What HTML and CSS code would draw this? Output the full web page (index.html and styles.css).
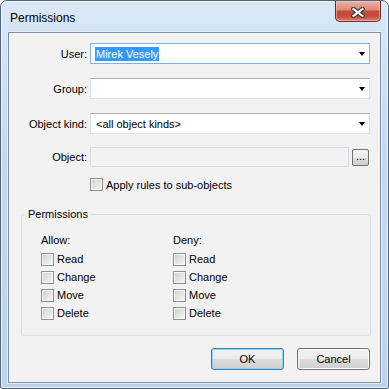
FILE: index.html
```html
<!DOCTYPE html>
<html lang="en">
  <head>
    <meta charset="UTF-8" />
    <title>Permissions</title>
    <link rel="stylesheet" href="styles.css">
  </head>
  <body>
    <div class="window">
      <div class="titlebar">
        <span class="title">Permissions</span>
        <button class="close" title="Close">
          <svg width="14" height="11" viewBox="0 0 14 11">
            <path d="M2.5 2 L11.5 9 M11.5 2 L2.5 9" stroke="#3b3b3b" stroke-width="4.5" stroke-linecap="square" />
            <path d="M2.5 2 L11.5 9 M11.5 2 L2.5 9" stroke="#ffffff" stroke-width="2.2" stroke-linecap="square" />
          </svg>
        </button>
      </div>

      <div class="client">
        <!-- Filter fields -->
        <div class="row row-user">
          <label class="field-label">User:</label>
          <div class="combo focused">
            <span class="selected">Mirek Vesely</span>
            <span class="arrow"></span>
          </div>
        </div>
        <div class="row">
          <label class="field-label">Group:</label>
          <div class="combo">
            <span class="arrow"></span>
          </div>
        </div>
        <div class="row">
          <label class="field-label">Object kind:</label>
          <div class="combo">
            <span class="value">&lt;all object kinds&gt;</span>
            <span class="arrow"></span>
          </div>
        </div>
        <div class="row row-object">
          <label class="field-label">Object:</label>
          <div class="textbox disabled"></div>
          <button class="browse">...</button>
        </div>
        <div class="row row-check">
          <span class="field-label"></span>
          <label class="check"><span class="box"></span>Apply rules to sub-objects</label>
        </div>

        <!-- Permissions group -->
        <div class="group">
          <span class="legend">Permissions</span>
          <div class="columns">
            <div class="column">
              <div class="column-title">Allow:</div>
              <label class="check"><span class="box"></span>Read</label>
              <label class="check"><span class="box"></span>Change</label>
              <label class="check"><span class="box"></span>Move</label>
              <label class="check"><span class="box"></span>Delete</label>
            </div>
            <div class="column">
              <div class="column-title">Deny:</div>
              <label class="check"><span class="box"></span>Read</label>
              <label class="check"><span class="box"></span>Change</label>
              <label class="check"><span class="box"></span>Move</label>
              <label class="check"><span class="box"></span>Delete</label>
            </div>
          </div>
        </div>

        <div class="buttons">
          <button class="btn default">OK</button>
          <button class="btn">Cancel</button>
        </div>
      </div>
    </div>
  </body>
</html>
```

FILE: styles.css
```css
body {
  margin: 0;
  font-family: "Liberation Sans", Arial, sans-serif;
  font-size: 11px;
  color: #000;
  background: #ffffff;
}

.window {
  box-sizing: border-box;
  width: 389px;
  height: 389px;
  border: 1px solid #526479;
  border-radius: 7px 7px 2px 2px;
  padding: 0 7px 5px 7px;
  background: linear-gradient(#dae8f6, #c4d9ef 40%, #bdd3eb);
  box-shadow: inset 0 0 0 1px rgba(255, 255, 255, 0.7);
  display: flex;
  flex-direction: column;
}

.titlebar {
  height: 31px;
  display: flex;
  align-items: flex-start;
  flex-shrink: 0;
}

.title {
  font-size: 12px;
  margin: 10px 0 0 2px;
  line-height: 14px;
}

.close {
  margin-left: auto;
  width: 46px;
  height: 21px;
  padding: 0;
  border: 1px solid #6e2e26;
  border-top: none;
  border-radius: 0 0 5px 5px;
  background: linear-gradient(#eab4a8, #dc8979 45%, #c64b38 50%, #c8493a 75%, #dc8070);
  box-shadow: inset 0 0 0 1px rgba(255, 220, 210, 0.45);
  display: flex;
  align-items: center;
  justify-content: center;
  padding-top: 3px;
}

.client {
  flex: 1;
  border: 1px solid #7d90a8;
  background: #f3f2f3;
  box-shadow: 0 0 0 1px #e4eef9;
}

.row {
  display: flex;
  align-items: center;
  margin-top: 14px;
  height: 21px;
}

.row-user {
  margin-top: 10px;
}

.row-object {
  margin-top: 13px;
  height: 20px;
}

.row-check {
  margin-top: 10px;
  height: 15px;
}

.field-label {
  width: 78px;
  margin-right: 3px;
  text-align: right;
  flex-shrink: 0;
}

.combo {
  box-sizing: border-box;
  width: 280px;
  height: 21px;
  border: 1px solid #dbdfe6;
  border-top-color: #abadb3;
  background: #fff;
  display: flex;
  align-items: center;
  padding-left: 4px;
}

.combo.focused {
  border-color: #7eb4ea;
}

.combo .value {
  padding-left: 1px;
}

.selected {
  background: #3399ff;
  color: #fff;
  padding: 0 1px;
  line-height: 14px;
}

.arrow {
  margin-left: auto;
  margin-right: 4px;
  width: 0;
  height: 0;
  border-left: 3.5px solid transparent;
  border-right: 3.5px solid transparent;
  border-top: 4px solid #000;
  margin-top: 1px;
}

.textbox {
  box-sizing: border-box;
  width: 259px;
  height: 20px;
  border: 1px solid #d6dbe2;
}

.textbox.disabled {
  background: #f3f2f3;
}

.browse {
  box-sizing: border-box;
  width: 17px;
  height: 17px;
  margin-left: 3px;
  padding: 0 0 3px 0;
  border: 1px solid #707070;
  border-radius: 2px;
  background: linear-gradient(#f2f2f2, #ebebeb 50%, #dddddd 50%, #cfcfcf);
  font-family: "Liberation Sans", Arial, sans-serif;
  font-size: 11px;
  line-height: 10px;
}

.check {
  display: flex;
  align-items: center;
  gap: 3px;
  height: 18px;
}

.row-check .check {
  height: 15px;
}

.box {
  box-sizing: border-box;
  width: 13px;
  height: 13px;
  border: 1px solid #8e8f8f;
  background: linear-gradient(135deg, #cfcfcf, #f7f7f7);
  box-shadow: inset 0 0 0 1px #f6f6f6;
  flex-shrink: 0;
}

.group {
  position: relative;
  box-sizing: border-box;
  height: 122px;
  margin: 22px 9px 0 12px;
  border: 1px solid #d5dfe5;
  border-radius: 3px;
  padding: 18px 0 0 19px;
}

.legend {
  position: absolute;
  top: -8px;
  left: 4px;
  padding: 0 2px;
  line-height: 14px;
  background: #f3f2f3;
}

.columns {
  display: flex;
}

.column {
  width: 132px;
}

.column-title {
  line-height: 14px;
  margin-bottom: 3px;
}

.buttons {
  display: flex;
  justify-content: flex-end;
  gap: 13px;
  margin-top: 12px;
  padding-right: 10px;
}

.btn {
  box-sizing: border-box;
  width: 73px;
  height: 22px;
  border: 1px solid #707070;
  border-radius: 3px;
  background: linear-gradient(#f2f2f2, #ebebeb 50%, #dddddd 50%, #cfcfcf);
  box-shadow: inset 0 0 0 1px #fcfcfc;
  font-family: "Liberation Sans", Arial, sans-serif;
  font-size: 11px;
  padding: 0;
}

.btn.default {
  border-color: #3c7fb1;
  box-shadow: inset 0 0 0 1px #8fd3f5;
}
```
